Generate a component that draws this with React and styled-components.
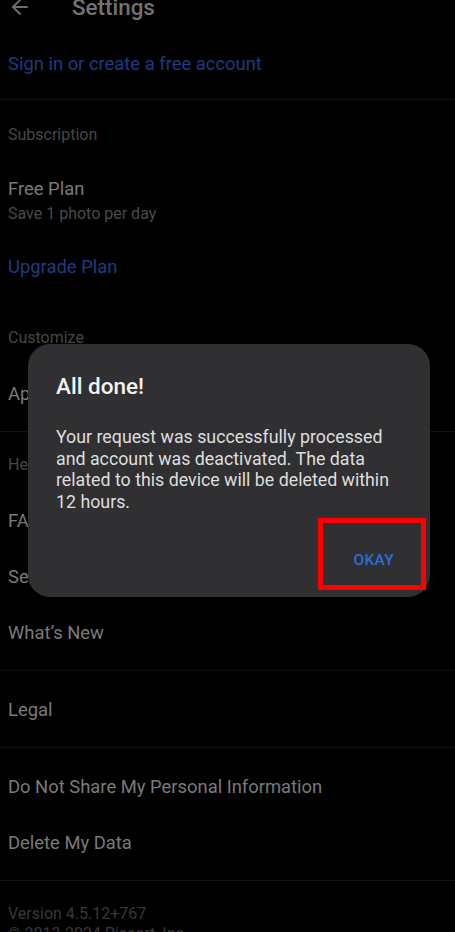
import React from "react";
import styled, { createGlobalStyle } from "styled-components";
import { ArrowLeft } from "lucide-react";

const GlobalStyle = createGlobalStyle`
  html, body {
    margin: 0;
    padding: 0;
    background: #000;
    overflow: hidden;
  }
  body {
    font-family: Roboto, "Noto Sans", "Liberation Sans", sans-serif;
    -webkit-font-smoothing: antialiased;
  }
`;

const Screen = styled.div`
  width: 455px;
  height: 932px;
  overflow: hidden;
  background: #000;
`;

const Page = styled.div`
  margin-top: -22px;
`;

const Header = styled.header`
  height: 57px;
  display: flex;
  align-items: center;
  gap: 40px;
  padding: 0 8px;
  color: #6f6f6f;
`;

const HeaderTitle = styled.h1`
  margin: 0;
  font-size: 22.4px;
  font-weight: 500;
  color: #727272;
`;

const Item = styled.div`
  height: 56px;
  display: flex;
  align-items: center;
  padding: 0 8px;
  font-size: 18.4px;
  color: ${(p) => (p.$link ? "#1f3a80" : "#7a7a7a")};
  white-space: nowrap;
`;

const PlanItem = styled.div`
  padding: 16px 8px 14px;
  display: flex;
  flex-direction: column;
  gap: 4px;
`;

const PlanTitle = styled.span`
  font-size: 18.4px;
  line-height: 22px;
  color: #7a7a7a;
`;

const PlanNote = styled.span`
  font-size: 16px;
  line-height: 20px;
  color: #4a4a4a;
`;

const SectionLabel = styled.div`
  padding: ${(p) => (p.$spaced ? "34px" : "13px")} 8px 17px;
  font-size: 16px;
  line-height: 20px;
  color: #474747;
`;

const Divider = styled.hr`
  margin: ${(p) => (p.$tight ? "8px 0 12px" : "10px 0")};
  border: 0;
  height: 1px;
  background: #111;
`;

const Footer = styled.div`
  padding: 13px 8px 0;
  font-size: 16px;
  line-height: 20px;
  color: #383838;
`;

const Scrim = styled.div`
  position: fixed;
  inset: 0;
  display: flex;
  justify-content: center;
  align-items: flex-start;
  padding-top: 344px;
`;

const Dialog = styled.div`
  width: 402px;
  box-sizing: border-box;
  margin-left: 3px;
  padding: 30px 24px 19px 28px;
  background: #303032;
  border-radius: 22px;
  display: flex;
  flex-direction: column;
`;

const DialogTitle = styled.h2`
  margin: 0 0 28px;
  font-size: 22.5px;
  line-height: 24px;
  font-weight: 500;
  color: #f2f2f2;
`;

const DialogBody = styled.p`
  margin: 0 0 30px;
  font-size: 17.8px;
  line-height: 21.5px;
  color: #dedede;
`;

const Actions = styled.div`
  display: flex;
  justify-content: flex-end;
`;

const TextButton = styled.button`
  position: relative;
  height: 36px;
  padding: 0 12px;
  border: 0;
  background: transparent;
  font-family: inherit;
  font-size: 15.5px;
  font-weight: 500;
  letter-spacing: 0.3px;
  color: #2a6fd8;
`;

const Highlight = styled.span`
  position: absolute;
  top: -24px;
  bottom: -12px;
  left: -23px;
  right: -20px;
  border: 5px solid #ff0000;
  pointer-events: none;
`;

export default function App() {
  return (
    <Screen>
      <GlobalStyle />
      <Page>
        <Header>
          <ArrowLeft size={24} strokeWidth={1.8} />
          <HeaderTitle>Settings</HeaderTitle>
        </Header>
        <Item $link>Sign in or create a free account</Item>
        <Divider $tight />
        <SectionLabel>Subscription</SectionLabel>
        <PlanItem>
          <PlanTitle>Free Plan</PlanTitle>
          <PlanNote>Save 1 photo per day</PlanNote>
        </PlanItem>
        <Item $link>Upgrade Plan</Item>
        <SectionLabel $spaced>Customize</SectionLabel>
        <Item>Appearance</Item>
        <Divider />
        <SectionLabel>Help</SectionLabel>
        <Item>FAQ</Item>
        <Item>Send Feedback</Item>
        <Item>What’s New</Item>
        <Divider />
        <Item>Legal</Item>
        <Divider />
        <Item>Do Not Share My Personal Information</Item>
        <Item>Delete My Data</Item>
        <Divider />
        <Footer>
          Version 4.5.12+767
          <br />© 2013-2024 Picsart, Inc.
        </Footer>
      </Page>
      <Scrim>
        <Dialog role="dialog">
          <DialogTitle>All done!</DialogTitle>
          <DialogBody>
            Your request was successfully processed and account was deactivated.
            The data related to this device will be deleted within 12 hours.
          </DialogBody>
          <Actions>
            <TextButton>
              OKAY
              <Highlight />
            </TextButton>
          </Actions>
        </Dialog>
      </Scrim>
    </Screen>
  );
}
